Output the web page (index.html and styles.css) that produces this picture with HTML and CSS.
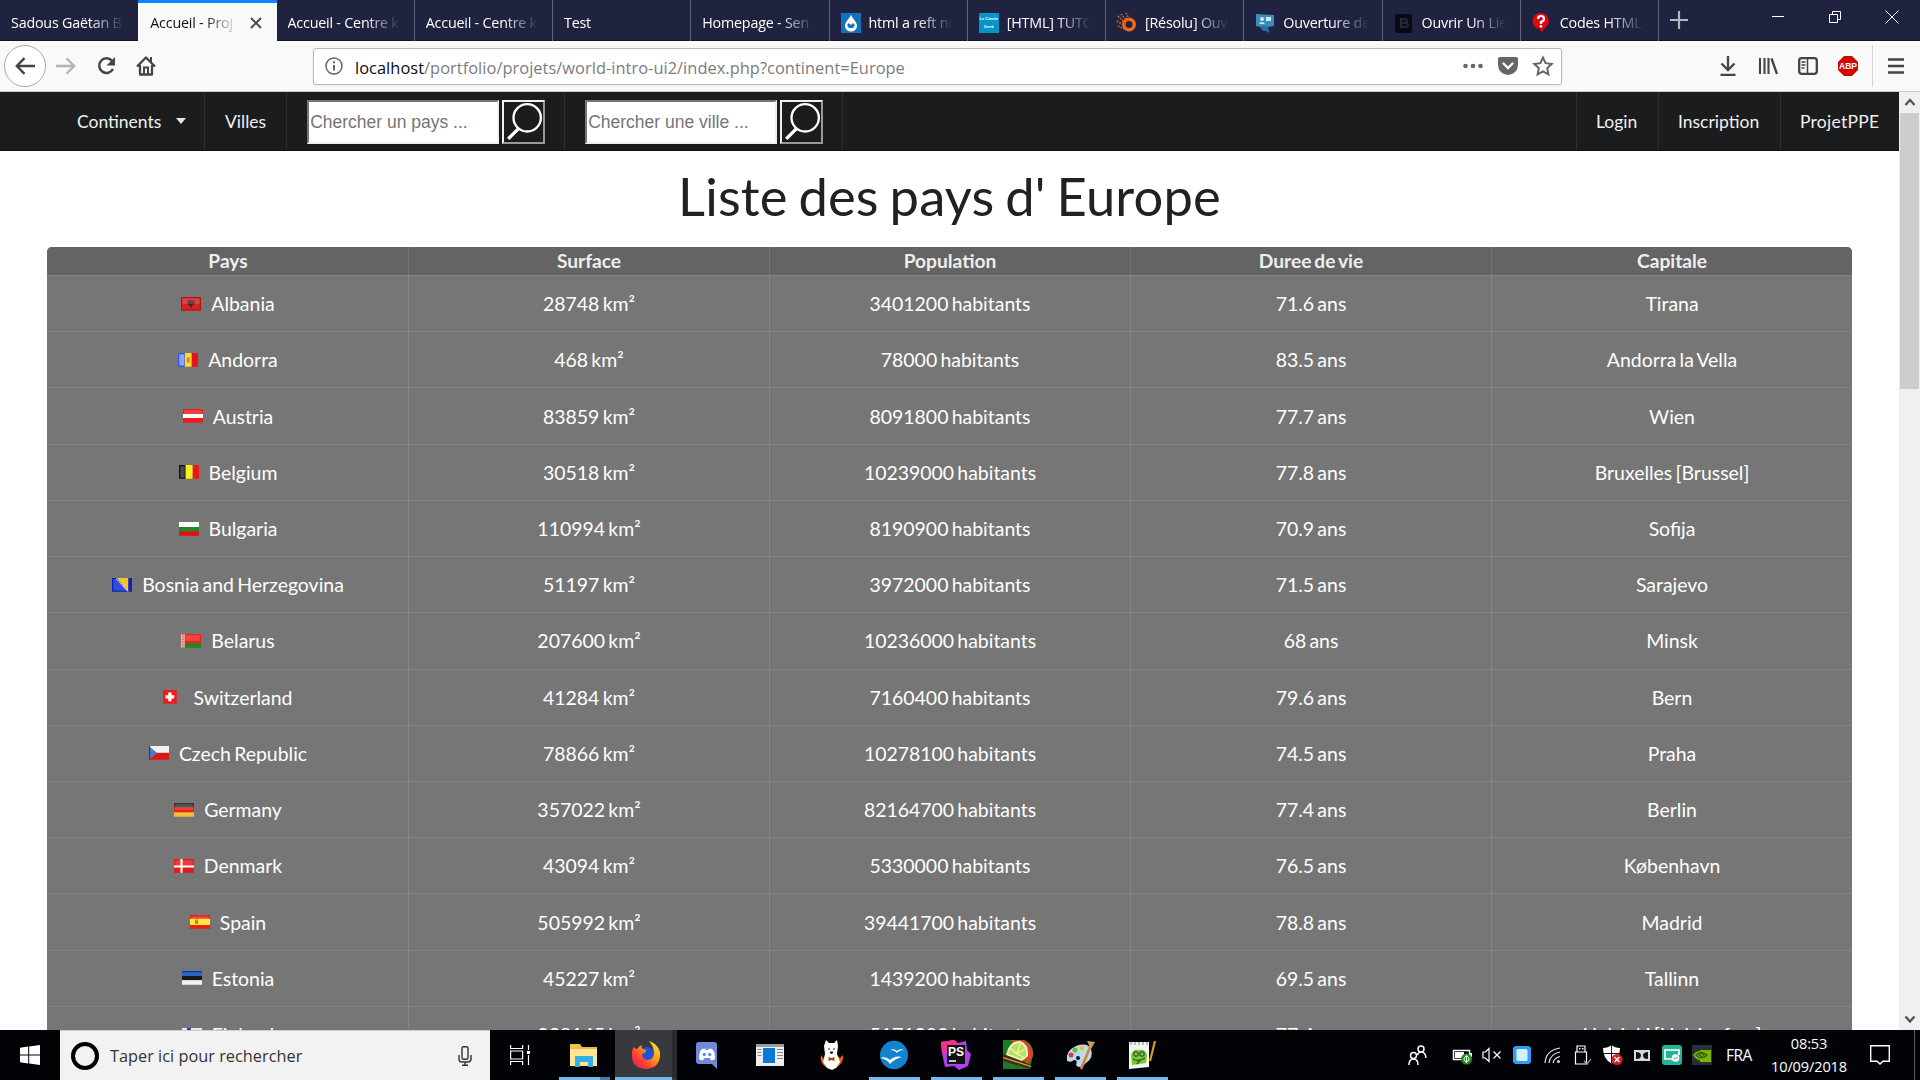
FILE: index.html
```html
<!DOCTYPE html>
<html lang="fr">
<head>
<meta charset="utf-8">
<title>Accueil - Projet</title>
<link rel="stylesheet" href="styles.css">
</head>
<body>
<header class="tabs">
  <div class="tab"><span class="title">Sadous Gaëtan B</span></div>
  <div class="tab active"><span class="title">Accueil - Proj</span><svg class="close" viewBox="0 0 12 12"><path d="M1 1l10 10M11 1L1 11" stroke="#444" stroke-width="1.9"/></svg></div>
  <div class="tab"><span class="title">Accueil - Centre k</span></div>
  <div class="tab"><span class="title">Accueil - Centre k</span></div>
  <div class="tab"><span class="title">Test</span></div>
  <div class="tab"><span class="title">Homepage - Sen</span></div>
  <div class="tab"><svg class="fav" viewBox="0 0 20 20"><rect width="20" height="20" fill="#1173bb"/><path d="M10 2c2 4 6 7 6 11a6 5.500 0 0 1-12 0C4 9 8 6 10 2z" fill="#fff"/><path d="M6 12l2-2 2 2 2-2 2 2-2 3H8z" fill="#1173bb"/></svg><span class="title">html a reft no</span></div>
  <div class="tab"><span class="fav geek">Le Carolo<br>Geek</span><span class="title">[HTML] TUTO</span></div>
  <div class="tab"><svg class="fav" viewBox="0 0 20 20"><circle cx="12" cy="11.500" r="5.200" fill="none" stroke="#f26a1b" stroke-width="3.400"/><path d="M1 3l8 8M4 1l6 7M0 8l8 5M9 0l3 6M1 13l6 3" stroke="#c65a24" stroke-width="1.900" stroke-dasharray="1.600 1.200"/></svg><span class="title">[Résolu] Ouv</span></div>
  <div class="tab"><svg class="fav" viewBox="0 0 20 20"><path d="M1 1l18 1v11l-6 1 1 6-8-6-5-1z" fill="#3d8cbd"/><path d="M4 13h9v5H8z" fill="#2272a4"/><circle cx="7" cy="6" r="2" fill="#cfe8f5"/><path d="M4 11q3-4 6 0zM11 4h5v4h-5z" fill="#cfe8f5"/></svg><span class="title">Ouverture de</span></div>
  <div class="tab"><svg class="fav" viewBox="0 0 20 20"><rect x="1" y="1" width="17" height="19" rx="2" fill="#080a14"/><path d="M7 6h4a2 2 0 0 1 0 4H7zM7 10h5a2 2 0 0 1 0 4H7z" fill="none" stroke="#222744" stroke-width="2"/></svg><span class="title">Ouvrir Un Lie</span></div>
  <div class="tab"><svg class="fav" viewBox="0 0 20 20"><path d="M9 0a8 8 0 0 1 5 14l-5 5.500L8 16A8 8 0 0 1 9 0z" fill="#e2060e"/><path d="M6 6q0-3 3-3t3 3q0 2-3 3v2" fill="none" stroke="#fff" stroke-width="2.200"/><circle cx="9" cy="13.300" r="1.300" fill="#fff"/></svg><span class="title">Codes HTML</span></div>
  <svg class="newtab" viewBox="0 0 18 18"><path d="M9 0v18M0 9h18" stroke="#b5b6c4" stroke-width="2.200"/></svg>
  <div class="wincontrols">
    <svg viewBox="0 0 14 14"><path d="M1 6.500h12" stroke="#fff"/></svg>
    <svg viewBox="0 0 14 14"><path d="M1.500 4.500h8v8h-8zM4.500 4V1.500h8v8H10" fill="none" stroke="#fff"/></svg>
    <svg viewBox="0 0 14 14"><path d="M.5.5l13 13M13.500.5l-13 13" stroke="#fff"/></svg>
  </div>
</header>

<div class="toolbar">
  <div class="back"><svg viewBox="0 0 20 20"><path d="M20 10H2M9.500 2.200L1.800 10l7.700 7.800" fill="none" stroke="#444" stroke-width="2.400"/></svg></div>
  <svg class="tool fwd" viewBox="0 0 20 20"><path d="M0 10h18M10.500 2.200L18.200 10l-7.700 7.800" fill="none" stroke="#b4b4b4" stroke-width="2.300"/></svg>
  <svg class="tool reload" viewBox="0 0 20 20"><path d="M16 4.800A7.300 7.300 0 1 0 17 13" fill="none" stroke="#444" stroke-width="2.500"/><path d="M19 1v8.500h-8.500z" fill="#444"/></svg>
  <svg class="tool home" viewBox="0 0 20 20"><path d="M1 10.500L10 1.500l9 9M4 9v9.500h12V9" fill="none" stroke="#444" stroke-width="2.300" stroke-linejoin="round"/><path d="M8 18v-6.500h4V18M15 1v5" fill="none" stroke="#444" stroke-width="2"/></svg>
  <div class="urlbar">
    <svg class="info" viewBox="0 0 18 18"><circle cx="9" cy="9" r="8" fill="none" stroke="#666" stroke-width="1.500"/><path d="M9 8v5.500M9 4.300v2" stroke="#666" stroke-width="2"/></svg>
    <span class="url"><b>localhost</b>/portfolio/projets/world-intro-ui2/index.php?continent=Europe</span>
    <svg class="uact" viewBox="0 0 20 20"><g fill="#666"><circle cx="2.500" cy="10" r="2.300"/><circle cx="10" cy="10" r="2.300"/><circle cx="17.500" cy="10" r="2.300"/></g></svg>
    <svg class="uact" viewBox="0 0 20 20"><path d="M2 1h16a2 2 0 0 1 2 2v6a10 10 0 0 1-20 0V3a2 2 0 0 1 2-2z" fill="#666"/><path d="M5.500 7.500L10 12l4.500-4.500" fill="none" stroke="#fff" stroke-width="2.300" stroke-linecap="round"/></svg>
    <svg class="uact" viewBox="0 0 20 20"><path d="M10 1.600l2.600 5.600 6.100.8-4.500 4.200 1.200 6.200L10 15.400l-5.400 3 1.200-6.200L1.300 8l6.100-.8z" fill="none" stroke="#666" stroke-width="2"/></svg>
  </div>
  <div class="rtools">
    <svg viewBox="0 0 20 20"><path d="M10 0v13M3.500 7.500L10 14l6.500-6.500M2.500 18.800h15" fill="none" stroke="#444" stroke-width="2.300"/></svg>
    <svg viewBox="0 0 20 20"><path d="M2 2v16M6.500 2v16M10.500 2v16" stroke="#444" stroke-width="2.100"/><path d="M13.500 2.500L19 18" stroke="#444" stroke-width="2.300"/></svg>
    <svg viewBox="0 0 20 20"><rect x="1.200" y="2.200" width="17.600" height="15.600" rx="2.500" fill="none" stroke="#444" stroke-width="2.300"/><path d="M9.500 2v16M3.500 6h4M3.500 9h4M3.500 12h3" stroke="#444" stroke-width="1.500"/></svg>
    <svg viewBox="0 0 20 20"><path d="M6 0h8l6 6v8l-6 6H6l-6-6V6z" fill="#d00808"/><text x="10" y="13.400" text-anchor="middle" class="abp">ABP</text></svg>
  </div>
  <svg class="burger" viewBox="0 0 16 16"><path d="M0 1.500h16M0 8h16M0 14.500h16" stroke="#444" stroke-width="2.300"/></svg>
</div>

<div class="viewport">
<main class="page">
  <nav class="menu">
    <a class="item first">Continents<i class="caret"></i></a>
    <a class="item">Villes</a>
    <div class="item search"><span class="field">Chercher un pays ...</span><span class="glass"><svg viewBox="0 0 37 38"><circle cx="22" cy="15" r="13" fill="none" stroke="#fff" stroke-width="2.200"/><path d="M13.500 25.500L4 35" stroke="#fff" stroke-width="3.200"/></svg></span></div>
    <div class="item search"><span class="field">Chercher une ville ...</span><span class="glass"><svg viewBox="0 0 37 38"><circle cx="22" cy="15" r="13" fill="none" stroke="#fff" stroke-width="2.200"/><path d="M13.500 25.500L4 35" stroke="#fff" stroke-width="3.200"/></svg></span></div>
    <div class="right"><a class="item login">Login</a><a class="item signup">Inscription</a><a class="item last">ProjetPPE</a></div>
  </nav>
  <h1>Liste des pays d' Europe</h1>
  <div class="table">
    <div class="row head"><span>Pays</span><span>Surface</span><span>Population</span><span>Duree de vie</span><span>Capitale</span></div>
    <div class="row"><span><svg class="flag" viewBox="0 0 16 11"><path fill="#d8201f" d="M0 0h16v11H0z"/><path d="M5 2l2 1 1-1 1 1 2-1-.5 4L9 7l-1 2-1-2-1.500-1z" fill="#4a2220"/><path class="rim" d="M.5.5h15v10H.5z"/><path class="gloss" d="M1 1h14v4.500H1z"/></svg>Albania</span><span>28748 km²</span><span>3401200 habitants</span><span>71.6 ans</span><span>Tirana</span></div>
    <div class="row"><span><svg class="flag" viewBox="0 0 16 11"><path fill="#2f55d4" d="M0 0h5.500v11H0z"/><path fill="#f7df2e" d="M5.500 0H11v11H5.500z"/><path fill="#e3141c" d="M11 0h5v11h-5z"/><path d="M7 3.500h2.500v4H7z" fill="#c98a4a"/><path d="M1 1h4v9H1z" fill="#8fa5e8"/></svg>Andorra</span><span>468 km²</span><span>78000 habitants</span><span>83.5 ans</span><span>Andorra la Vella</span></div>
    <div class="row"><span><svg class="flag" viewBox="0 0 16 11"><path fill="#f01c1c" d="M0 0h16v11H0z"/><path fill="#fff" d="M0 4h16v3.200H0z"/><path class="gloss" d="M1 1h14v4.500H1z"/></svg>Austria</span><span>83859 km²</span><span>8091800 habitants</span><span>77.7 ans</span><span>Wien</span></div>
    <div class="row"><span><svg class="flag" viewBox="0 0 16 11"><path fill="#111" d="M0 0h5.300v11H0z"/><path fill="#f9ef1c" d="M5.300 0H11v11H5.300z"/><path fill="#ee1515" d="M11 0h5v11h-5z"/><path fill="#4a4a4a" d="M1 1h3.500v9H1z"/></svg>Belgium</span><span>30518 km²</span><span>10239000 habitants</span><span>77.8 ans</span><span>Bruxelles [Brussel]</span></div>
    <div class="row"><span><svg class="flag" viewBox="0 0 16 11"><path fill="#fff" d="M0 0h16v4H0z"/><path fill="#1f8a1f" d="M0 4h16v3.500H0z"/><path fill="#e01010" d="M0 7.500h16V11H0z"/></svg>Bulgaria</span><span>110994 km²</span><span>8190900 habitants</span><span>70.9 ans</span><span>Sofija</span></div>
    <div class="row"><span><svg class="flag" viewBox="0 0 16 11"><path fill="#1022b4" d="M0 0h16v11H0z"/><path fill="#2f4fd8" d="M1 1h3l9 9H1z"/><path fill="#f7c52a" d="M4 0h9v11z"/><path d="M3.500.5l9 10" stroke="#dfe6ff" stroke-dasharray="1 .6" fill="none"/></svg>Bosnia and Herzegovina</span><span>51197 km²</span><span>3972000 habitants</span><span>71.5 ans</span><span>Sarajevo</span></div>
    <div class="row"><span><svg class="flag" viewBox="0 0 16 11"><path fill="#ee2020" d="M0 0h16v7.500H0z"/><path fill="#1c8a1c" d="M0 7.500h16V11H0z"/><path fill="#f3b5ae" d="M0 0h3v11H0z"/><path d="M1.500 0v11" stroke="#d33" stroke-dasharray="1 1"/><path class="gloss" d="M3 1h12v4.500H3z"/></svg>Belarus</span><span>207600 km²</span><span>10236000 habitants</span><span>68 ans</span><span>Minsk</span></div>
    <div class="row"><span><svg class="flag" viewBox="0 0 16 11"><path fill="#ee1c1c" d="M0 0h11v11H0z"/><path d="M5.500 2v7M2 5.500h7" stroke="#fff" stroke-width="2.600"/></svg>Switzerland</span><span>41284 km²</span><span>7160400 habitants</span><span>79.6 ans</span><span>Bern</span></div>
    <div class="row"><span><svg class="flag" viewBox="0 0 16 11"><path fill="#f2f2f2" d="M0 0h16v5.500H0z"/><path fill="#de1717" d="M0 5.500h16V11H0z"/><path fill="#4a7ad0" d="M0 0l6.500 5.500L0 11z"/><path fill="#143a8c" d="M0 0h.8v11H0z"/></svg>Czech Republic</span><span>78866 km²</span><span>10278100 habitants</span><span>74.5 ans</span><span>Praha</span></div>
    <div class="row"><span><svg class="flag" viewBox="0 0 16 11"><path fill="#3a3634" d="M0 0h16v3.800H0z"/><path fill="#e8211c" d="M0 3.500h16v4H0z"/><path fill="#f3bd35" d="M0 7.500h16V11H0z"/><path class="gloss" d="M1 1h14v4.500H1z"/></svg>Germany</span><span>357022 km²</span><span>82164700 habitants</span><span>77.4 ans</span><span>Berlin</span></div>
    <div class="row"><span><svg class="flag" viewBox="0 0 16 11"><path fill="#e61919" d="M0 0h16v11H0z"/><path class="gloss" d="M1 1h14v4.500H1z"/><path d="M6 0v11M0 6h16" stroke="#fff" stroke-width="1.700"/></svg>Denmark</span><span>43094 km²</span><span>5330000 habitants</span><span>76.5 ans</span><span>København</span></div>
    <div class="row"><span><svg class="flag" viewBox="0 0 16 11"><path fill="#e81f1b" d="M0 0h16v11H0z"/><path fill="#fbe92a" d="M0 3h16v5H0z"/><path fill="#d8662a" d="M4 3.500h2.500v3.500H4z"/><path class="gloss" d="M1 1h14v4.500H1z"/></svg>Spain</span><span>505992 km²</span><span>39441700 habitants</span><span>78.8 ans</span><span>Madrid</span></div>
    <div class="row"><span><svg class="flag" viewBox="0 0 16 11"><path fill="#2b66c4" d="M0 0h16v4H0z"/><path fill="#181818" d="M0 4h16v3.300H0z"/><path fill="#f1f1f1" d="M0 7.300h16V11H0z"/><path d="M0 .5h16" stroke="#1030a0"/></svg>Estonia</span><span>45227 km²</span><span>1439200 habitants</span><span>69.5 ans</span><span>Tallinn</span></div>
    <div class="row"><span><svg class="flag" viewBox="0 0 16 11"><path fill="#e6ebfa" d="M0 0h16v11H0z"/><path d="M5.500 0v11M0 5.500h16" stroke="#1a3cb8" stroke-width="3"/></svg>Finland</span><span>338145 km²</span><span>5171300 habitants</span><span>77.4 ans</span><span>Helsinki [Helsingfors]</span></div>
  </div>
</main>
<div class="scrollbar">
  <svg viewBox="0 0 20 21"><path d="M5.500 13l4.500-5 4.500 5" fill="none" stroke="#505050" stroke-width="2.200"/></svg>
  <div class="thumb"></div>
  <svg class="down" viewBox="0 0 20 21"><path d="M5.500 7.500l4.500 5 4.500-5" fill="none" stroke="#505050" stroke-width="2.200"/></svg>
</div>
</div>

<footer class="taskbar">
  <div class="start"><svg viewBox="0 0 20 20"><path d="M0 2.800L8.200 1.600v7.900H0zM9.200 1.400L20 0v9.500H9.200zM0 10.500h8.200v7.900L0 17.200zM9.200 10.500H20V20L9.200 18.600z" fill="#fff"/></svg></div>
  <div class="tsearch"><i class="ring"></i><span>Taper ici pour rechercher</span><svg viewBox="0 0 14 20"><rect x="4" y=".7" width="6" height="12.500" rx="1.500" fill="none" stroke="#333" stroke-width="1.400"/><path d="M1 9v4q0 3 3 3h6q3 0 3-3V9M7 16v3M4 19.200h6" fill="none" stroke="#333" stroke-width="1.400"/></svg></div>
  <div class="apps">
    <div class="app tv"><svg class="s20" viewBox="0 0 20 20"><path d="M.6 0v3.500h12V0M.6 20v-3.500h12V20M.6 6h12v8H.6zM18.500 0v5M18.500 10v10" fill="none" stroke="#fff" stroke-width="1.200"/><path d="M17 6h3v3h-3z" fill="#fff"/></svg></div>
    <div class="app open multi"><svg viewBox="0 0 30 30"><path d="M1 4h10l2 3h15v19H1z" fill="#e9bd48"/><path d="M1 9h27v17H1z" fill="#ffe694"/><path d="M2 5h8v2H2z" fill="#ffc62e"/><path d="M6 16h18v11h-5v-5h-8v5H6z" fill="#38aee6"/></svg></div>
    <div class="app open current"><svg viewBox="0 0 30 30"><defs><linearGradient id="fx" x1="1" y1="0" x2="0" y2="1"><stop offset="0" stop-color="#fff036"/><stop offset=".4" stop-color="#ff9a14"/><stop offset=".7" stop-color="#ff3b35"/><stop offset="1" stop-color="#e0157f"/></linearGradient></defs><circle cx="16" cy="16" r="9" fill="#2151d6"/><path d="M3 7q1 2 3 2 2-3 5-4-1 3 1 4l3 1q0 3-4 4 0 5 5 6 7 0 7-7Q23 7 18 1q9 3 11 11 1 16-14 17Q0 28 1 14 1 9 3 7z" fill="url(#fx)"/></svg></div>
    <div class="app"><svg viewBox="0 0 30 30"><path d="M6 2h15a3 3 0 0 1 3 3v24l-5-5H6a3 3 0 0 1-3-3V5a3 3 0 0 1 3-3z" fill="#7289da"/><path d="M6 19q0-8 3-10l3-.5 1 1.500h2l1-1.500 3 .5q3 2 3 10-3 2-4 1l-1.500-2h-5L10 20q-2 1-4-1z" fill="#fff"/><circle cx="11.300" cy="14.500" r="1.700" fill="#7289da"/><circle cx="16.700" cy="14.500" r="1.700" fill="#7289da"/></svg></div>
    <div class="app"><svg viewBox="0 0 30 30"><path d="M1 4h28v22H1z" fill="#eee"/><path d="M1 4h28v3H1z" fill="#9a9a9a"/><path d="M8 8h12v15H8z" fill="#0a78d8"/><path d="M2.500 9.500h4M2.500 12.500h4M2.500 15.500h4M22 9.500h6M22 12.500h6M22 15.500h6M22 18.500h6" stroke="#888"/></svg></div>
    <div class="app"><svg viewBox="0 0 30 30"><path d="M4 15q-2 9 7 13h8q8-5 7-13l-3 3-3-3H10l-3 4z" fill="#ea6315"/><path d="M9 0l3 3h5l3-3 1 6-1 8 3 8-4 6-4 2-5-2-4-6 2-8-1-8z" fill="#fff"/><path d="M11 9h2M16 9h2M13 12h3l-1.500 2z" stroke="#222" fill="#222"/><path d="M11.500 17l3 1 3-1v4l-3-1-3 1z" fill="#a34a12"/></svg></div>
    <div class="app open"><svg viewBox="0 0 30 30"><ellipse cx="15" cy="15" rx="14" ry="14.300" fill="#1284cd"/><path d="M11 10q4-2 7 1 3-3 7-1-5 0-7 3-2-3-7-3zM1 18q6-2 10 2 5-5 12-3-8 2-12 7-3-5-10-6z" fill="#fff"/></svg></div>
    <div class="app open"><svg viewBox="0 0 30 30"><path d="M0 2L13 0l4 3 8-2 1 9 4 4-3 12-9 4-5-4-9 1L1 13z" fill="#b33df0"/><path d="M0 2L13 0l4 3-3 10H1z" fill="#f5318e"/><path d="M6 5h18v19H6z" fill="#111"/><text x="15" y="15.500" text-anchor="middle" class="ps">PS</text><path d="M8 21h7" stroke="#fff" stroke-width="1.500"/></svg></div>
    <div class="app open"><svg viewBox="0 0 30 30"><path d="M0 0h22q9 5 8 15l-3 14H0z" fill="#1b7a25"/><path d="M8 0h12q11 5 10 16l-5 8-5-4z" fill="#d6452a"/><path d="M3 15Q6 1 17 1q9 3 8 15l-6 5z" fill="#eef7c4"/><path d="M5 14Q8 3 17 3q7 3 6 13l-5 3z" fill="#b9e05e"/><path d="M17 4l-3 10 8 4M7 8l7 6M22 9l-8 5" stroke="#e9f6b8" stroke-width="1.200" fill="none"/><path d="M0 14l28 11-1 4-27-8z" fill="#4a2a12"/><path d="M0 17.500l28 9" stroke="#d8b05c" stroke-width="1.300"/></svg></div>
    <div class="app open"><svg viewBox="0 0 30 30"><path d="M2 21Q0 11 11 6q11-4 15 3 3 9-5 14-7 7-10 2 2-5-2-5-3 3-7 1z" fill="#b9daf0"/><circle cx="6" cy="15" r="2.500" fill="#e23b2e"/><circle cx="10" cy="10" r="2.500" fill="#67ba36"/><circle cx="17" cy="8" r="2.500" fill="#f4bd27"/><circle cx="13" cy="18" r="2" fill="#0a1320"/><path d="M26 5L16 29" stroke="#d7822b" stroke-width="2.600"/><path d="M22 1l8 1-4 7z" fill="#c99d6b"/></svg></div>
    <div class="app open"><svg viewBox="0 0 30 30"><path d="M2 2h20v25l-20 2z" fill="#f3f6ee"/><path d="M4 2v3M8 2v3M12 2v3M16 2v3M20 2v3" stroke="#aaa" stroke-width="1.500"/><path d="M4 15q2-6 7-5 8-1 9 5l-1 8-14 2z" fill="#78c832"/><circle cx="9" cy="14" r="2.300" fill="none" stroke="#234"/><circle cx="15" cy="14" r="2.300" fill="none" stroke="#234"/><path d="M6 19q6 3 12-1M10 24l3-4" stroke="#245c16" fill="none" stroke-width="1.300"/><path d="M28 1l-5 20" stroke="#d99a1f" stroke-width="2.200"/></svg></div>
  </div>
  <div class="tray">
    <svg class="people" viewBox="0 0 20 20"><path d="M1 20q0-6 4.500-6t4.500 6" fill="none" stroke="#fff" stroke-width="1.500"/><circle cx="5.500" cy="10.500" r="3" fill="none" stroke="#fff" stroke-width="1.500"/><circle cx="13" cy="4" r="3" fill="none" stroke="#fff" stroke-width="1.500"/><path d="M9.500 10q1-3 3.500-3 4.500 0 5 6" fill="none" stroke="#fff" stroke-width="1.500"/></svg>
    <svg viewBox="0 0 20 20"><path d="M1.500 5.500h16v9h-16z" fill="none" stroke="#fff" stroke-width="1.500"/><path d="M3 7h9v6H3zM18 8h2v4h-2z" fill="#fff"/><circle cx="14.500" cy="14" r="5.500" fill="#16961b"/><path d="M14.500 10.500q5 4 0 6.500-5-2.500 0-6.500zV18" stroke="#fff" fill="none"/></svg>
    <svg viewBox="0 0 20 20"><path d="M1 7h2.500L7 3.500v13L3.500 13H1z" fill="none" stroke="#fff" stroke-width="1.200"/><path d="M11.500 6.500l7 7M18.500 6.500l-7 7" stroke="#fff" stroke-width="1.200"/></svg>
    <svg viewBox="0 0 20 20"><path d="M3 1h14l2 2v14l-2 2H3l-2-2V3z" fill="#2f9df4"/><rect x="4.500" y="4" width="11" height="12" rx="1.500" fill="#d6efff"/></svg>
    <svg viewBox="0 0 20 20"><path d="M3 18Q4 5 18 3M7 18Q8 9 18 7M11 18Q12 13 18 11.500" fill="none" stroke="#ddd" stroke-width="1.200"/><circle cx="16.500" cy="16.500" r="1.500" fill="#ddd"/></svg>
    <svg viewBox="0 0 20 20"><path d="M5 7V1h8v6M3.500 7h11v12h-11z" fill="none" stroke="#fff" stroke-width="1.200"/><path d="M7 3h1.500v1.500H7zM10 3h1.500v1.500H10z" fill="#fff"/><path d="M12 16l3 3 4-5" fill="none" stroke="#aaa" stroke-width="1.200"/></svg>
    <svg viewBox="0 0 20 20"><path d="M9.500 0Q13 3 18 3q0 11-8.500 15.500Q1 14 1 3q5 0 8.500-3z" fill="#fff"/><path d="M9.500 0v18M1 8.500h17" stroke="#111"/><circle cx="15" cy="14.500" r="5.500" fill="#d81b22"/><path d="M12.500 12l5 5M17.500 12l-5 5" stroke="#fff" stroke-width="1.400"/></svg>
    <svg viewBox="0 0 20 20"><path d="M2 5h16v11H2z" fill="#d8d8d8"/><path d="M4 7q5 0 5 3.500T4 14zM16 7q-5 0-5 3.500t5 3.500z" fill="#111"/></svg>
    <svg viewBox="0 0 20 20"><rect width="20" height="20" rx="3" fill="#25b698"/><path d="M10 14H3V5h14v5" fill="none" stroke="#fff" stroke-width="1.700"/><circle cx="13.500" cy="13" r="3.800" fill="#fff"/><path d="M11.500 13l1.500 1 3-2" stroke="#25b698" fill="none"/></svg>
    <svg viewBox="0 0 20 20"><path d="M0 0h20v20H0z" fill="#2b3037"/><path d="M1 10q3-4 7-4V5h11v12H8v-2q-4 0-7-5z" fill="#76b900"/><path d="M4 10q5-5 11 0-6 6-11 0zm3 0q3-3 5 0-2 3-5 0z" fill="none" stroke="#3c5a10" stroke-width="1.200"/></svg>
    <span class="lang">FRA</span>
    <div class="clock"><span>08:53</span><span>10/09/2018</span></div>
    <svg class="notif" viewBox="0 0 20 20"><path d="M.7.7h18.600v15.600H13L10 19l-3-2.700H.7z" fill="none" stroke="#fff" stroke-width="1.400"/></svg>
  </div>
  <div class="peek"></div>
</footer>
</body>
</html>
```
FILE: styles.css
```css
* { box-sizing: border-box; }
body { margin: 0; width: 1920px; height: 1080px; overflow: hidden; display: flex; flex-direction: column; background: #fff; font-family: Lato, sans-serif; }
svg { display: block; flex: none; overflow: visible; }

/* tab strip */
.tabs { height: 41px; flex: none; display: flex; background: #202340; border-bottom: 1px solid #14152c; font: 14.3px/20px "Open Sans", sans-serif; letter-spacing: -.2px; color: #fff; }
.tab { width: 138.25px; height: 41px; flex: none; display: flex; align-items: center; padding: 4px 11px 0 11px; border-right: 1px solid #62647a; }
.tab:first-child { border-right: 0; }
.tab.active { background: #f9f9fa; color: #111; border: 0; border-top: 3px solid #0a84ff; padding: 1px 13px 0 12px; }
.title { flex: 1; min-width: 0; overflow: hidden; white-space: nowrap; -webkit-mask-image: linear-gradient(to left, transparent 3px, #000 38px); mask-image: linear-gradient(to left, transparent 3px, #000 38px); }
.close { width: 12px; height: 12px; margin: 0 2px 0 8px; }
.fav { width: 20px; height: 20px; flex: none; margin-right: 8px; }
.geek { background: #0095c8; font: bold 4px/8px "Liberation Sans", sans-serif; letter-spacing: 0; text-align: center; padding-top: 2px; white-space: nowrap; }
.newtab { width: 18px; height: 18px; margin: 11px 0 0 11px; }
.wincontrols { margin: 10px 21px 0 auto; display: flex; gap: 43px; }
.wincontrols svg { width: 14px; height: 14px; }

/* toolbar */
.toolbar { height: 51px; flex: none; display: flex; align-items: center; background: #f9f9fa; border-bottom: 1px solid #ccc; padding-left: 4px; }
.back { width: 42px; height: 42px; border: 1px solid #aaa; border-radius: 50%; background: #fff; display: grid; place-items: center; }
.back svg, .tool { width: 20px; height: 20px; }
.fwd { margin-left: 10px; }
.reload { margin-left: 20px; }
.home { margin-left: 20px; }
.urlbar { width: 1249px; height: 37px; margin-left: 157px; border: 1px solid #b9b9b9; border-radius: 3px; background: #fff; display: flex; align-items: center; padding: 0 8px 0 11px; gap: 15px; box-shadow: 0 1px 3px rgba(0,0,0,.07); }
.info { width: 18px; height: 18px; margin-right: -3px; }
.url { flex: 1; font: 16.4px/24px "Open Sans", sans-serif; letter-spacing: .04px; color: #7c7c7c; white-space: nowrap; padding-top: 3px; }
.url b { font-weight: 400; color: #0c0c0d; }
.uact { width: 20px; height: 20px; }
.rtools { display: flex; gap: 20px; margin-left: 156px; padding-right: 14px; height: 42px; align-items: center; border-right: 1px solid #d5d5d5; }
.rtools svg { width: 20px; height: 20px; }
.abp { font: bold 8.5px "Liberation Sans", sans-serif; fill: #fff; }
.burger { width: 16px; height: 16px; margin-left: 15px; }

/* site */
.viewport { height: 938px; flex: none; display: flex; overflow: hidden; }
.page { width: 1899px; flex: none; }
.menu { height: 59px; background: #1b1c1d; display: flex; padding-left: 57px; font-size: 17.5px; color: #f0f0f0; border-bottom: 1px solid #161014; }
.item { display: flex; align-items: center; padding: 0 20px; border-right: 1px solid #2d2e2f; }
.first { width: 148px; }
.caret { border: 5px solid transparent; border-top: 6px solid #e8e8e8; border-bottom: 0; margin-left: 15px; }
.search { width: 278px; gap: 3px; padding: 2px 0 0 20px; }
.field { width: 192px; height: 44px; background: #fff; border: 2px solid #767676; border-right-color: #f0f0f0; border-bottom-color: #f0f0f0; color: #757575; font: 17.5px/40px "Liberation Sans", sans-serif; padding-left: 1px; white-space: nowrap; }
.glass { width: 43px; height: 44px; border: 2px solid #f0f0f0; border-right-color: #999; border-bottom-color: #999; background: #1b1c1d; }
.glass svg { width: 39px; height: 40px; }
.right { margin-left: auto; display: flex; border-left: 1px solid #2d2e2f; }
.right .item { padding: 0 0 0 19px; }
.login { width: 82px; }
.signup { width: 122px; }
.right .last { width: 118px; border: 0; letter-spacing: .25px; }
h1 { margin: 0; height: 96px; font-size: 52.5px; line-height: 90px; font-weight: 400; text-align: center; color: #212121; letter-spacing: .15px; word-spacing: -2.7px; }
.table { width: 1805px; margin-left: 47px; border-radius: 5px 5px 0 0; overflow: hidden; background: #767676; color: #fff; font-size: 19.45px; word-spacing: -1.7px; }
.row { height: 56.22px; display: grid; grid-template-columns: repeat(5, 1fr); border-bottom: 1px solid #858585; }
.row span { display: flex; align-items: center; justify-content: center; border-left: 1px solid #858585; }
.row span:first-child { border-left-color: transparent; }
.head { height: 29px; background: #646464; font-weight: 700; color: #eee; font-size: 19.2px; }
.row.head span { border-left-color: #747474; padding-bottom: 2px; }
.row.head span:first-child { border-left-color: transparent; }
.flag { width: 20px; height: 13.75px; margin-right: 10px; }
.rim { fill: none; stroke: rgba(120,0,0,.35); }
.gloss { fill: rgba(255,255,255,.16); }
.scrollbar { width: 21px; background: #f0f0f0; display: flex; flex-direction: column; padding: 0 0 0 1px; }
.scrollbar svg { width: 20px; height: 21px; }
.thumb { width: 19px; height: 276px; background: #cdcdcd; }
.scrollbar .down { margin-top: auto; }

/* taskbar */
.taskbar { height: 50px; flex: none; display: flex; background: #010307; font-family: "Open Sans", sans-serif; color: #fff; }
.start { width: 60px; display: grid; place-items: center; }
.start svg { width: 20px; height: 20px; }
.tsearch { width: 430px; background: #f2f2f2; border-top: 1px solid #ccc; display: flex; align-items: center; padding: 0 18px 0 11px; color: #333; font-size: 16.3px; letter-spacing: .02px; }
.ring { width: 28px; height: 28px; border: 4px solid #000; border-radius: 50%; margin-right: 11px; }
.tsearch svg { width: 14px; height: 20px; margin-left: auto; }
.apps { display: flex; }
.app { width: 62px; height: 50px; display: grid; place-items: center; border-bottom: 3px solid transparent; padding-top: 2px; }
.app svg { width: 30px; height: 30px; }
.tv { width: 63px; padding-right: 3px; }
.app .s20 { width: 20px; height: 20px; }
.open { background: linear-gradient(#76b9ed, #76b9ed) center bottom / 51px 3px no-repeat border-box; }
.multi { background: linear-gradient(to right, #76b9ed 41px, #4d7ba0 41px) center bottom / 51px 3px no-repeat border-box; }
.current { background: linear-gradient(#76b9ed, #76b9ed) left bottom / 57px 3px no-repeat border-box, #38393c; border-right: 5px solid #292a2c; padding-left: 5px; }
.ps { font: bold 12px "Liberation Sans", sans-serif; fill: #fff; }
.tray { margin-left: auto; display: flex; align-items: center; gap: 10px; }
.tray svg { width: 20px; height: 20px; }
.tray .people { margin-right: 14px; }
.lang { font-size: 15.5px; letter-spacing: -.5px; width: 28px; margin-left: 4px; }
.clock { width: 90px; display: flex; flex-direction: column; text-align: center; font-size: 14.6px; line-height: 23px; letter-spacing: -.15px; }
.tray .notif { margin: 0 24px 0 6px; }
.peek { width: 6px; border-left: 1px solid #5a5d62; }
```
